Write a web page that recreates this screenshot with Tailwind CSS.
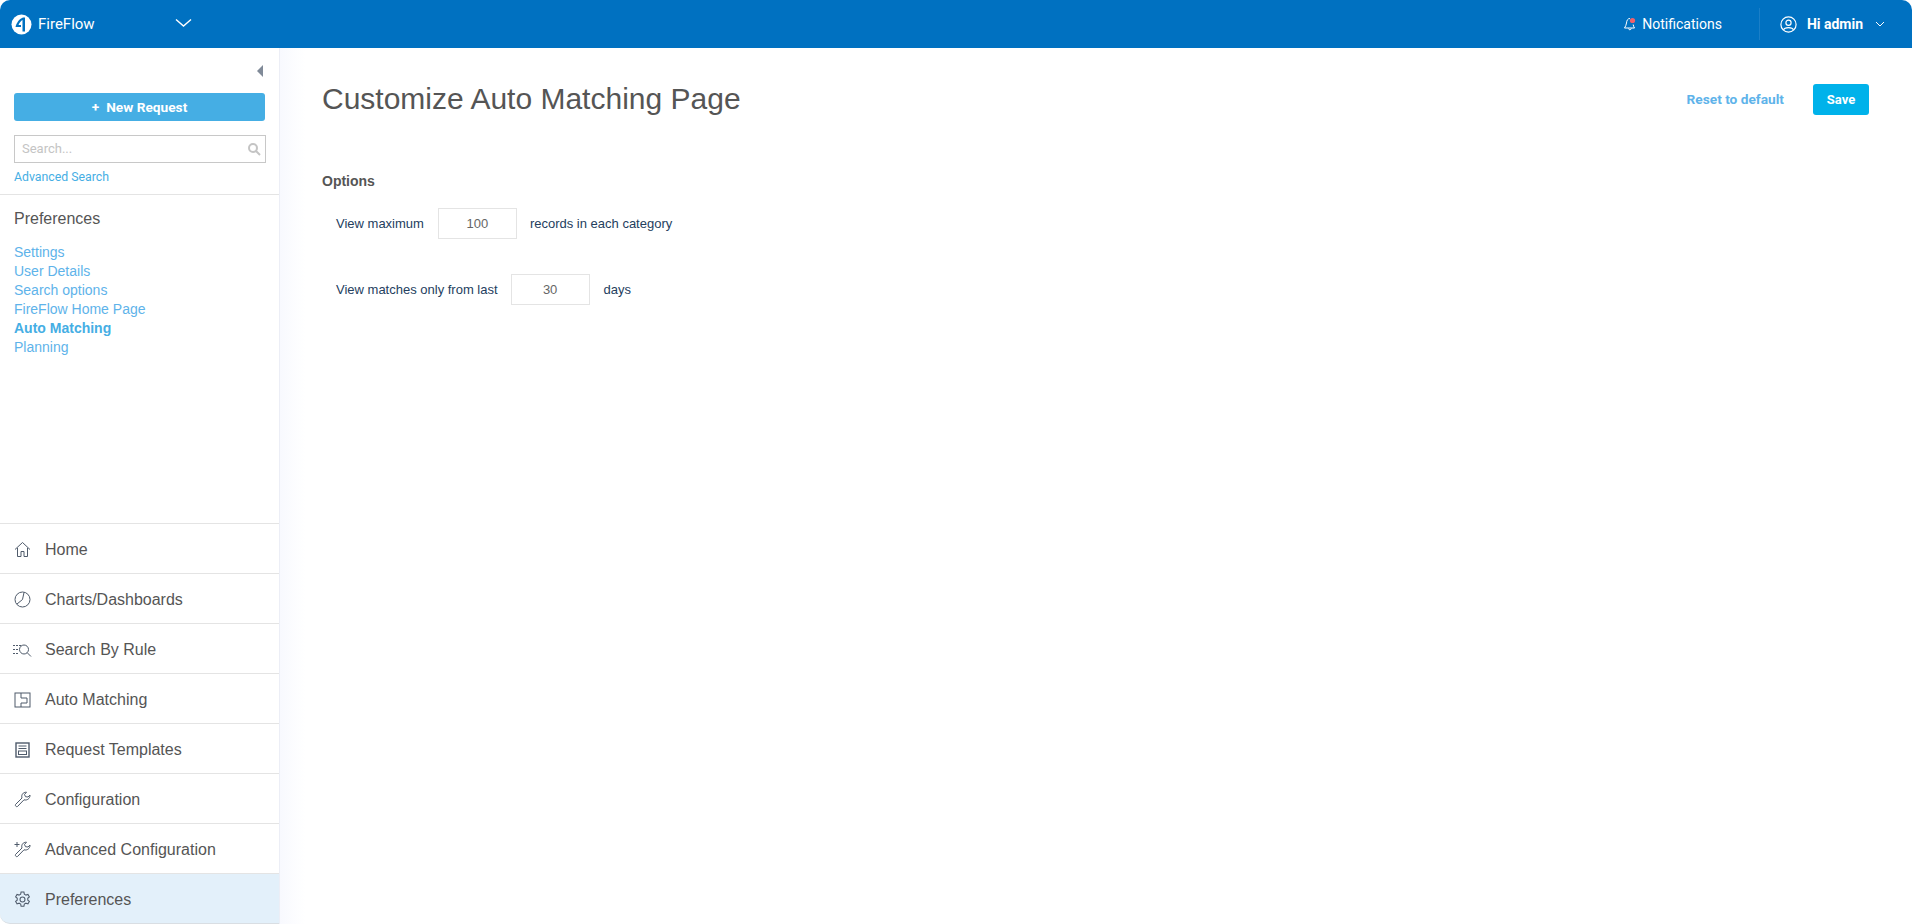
<!DOCTYPE html>
<html lang="en">
<head>
    <meta charset="UTF-8">
    <meta name="viewport" content="width=device-width, initial-scale=1.0">
    <title>Customize Auto Matching Page</title>
    <script src="https://cdn.jsdelivr.net/npm/@tailwindcss/browser@4"></script>
</head>
<body class="bg-white h-[924px] w-[1912px] overflow-hidden font-['Liberation_Sans',Arial,sans-serif]">
    <div class="h-full flex flex-col">
        <!-- Top bar -->
        <header class="h-[48px] shrink-0 bg-[#0071c1] rounded-t-[10px] flex items-center text-white font-['Roboto',sans-serif]">
            <div class="pl-[11px] flex items-center w-[175px]">
                <svg class="w-[21px] h-[21px]" viewBox="0 0 21 21">
                    <circle cx="10.5" cy="10.5" r="10" fill="#fff"/>
                    <path d="M12 3.5 C8 5 5.5 9 4.5 13 L10 13 L10 11 L7.5 11 C8.5 8.5 10 7 11.5 6 L11.5 17.5 L14 17.5 L14 3.5 Z" fill="#0071c1"/>
                </svg>
                <span class="ml-[6px] text-[15px]">FireFlow</span>
            </div>
            <svg class="w-[17px] h-[10px] mb-[2px]" viewBox="0 0 17 10" fill="none" stroke="#fff" stroke-width="1.4"><path d="M1 1.5 L8.5 8 L16 1.5"/></svg>
            <div class="ml-auto flex items-center h-full">
                <svg class="w-[14px] h-[14px]" viewBox="0 0 14 14" fill="none" stroke="#fff" stroke-width="1">
                    <path d="M7 1.5 C4.5 1.5 3.8 3.5 3.5 6 C3.3 8 2.4 9.5 1.5 11 L11.5 11 C10.8 10 10.4 9 10.2 7.5"/>
                    <path d="M5.5 11.5 C5.7 13.2 8 13.2 8.3 11.5"/>
                    <circle cx="9.5" cy="3.5" r="2.6" fill="#f0606a" stroke="none"/>
                </svg>
                <span class="ml-[5px] text-[14px]">Notifications</span>
                <div class="ml-[37px] w-px h-[32px] bg-[#1a7fc8]"></div>
                <svg class="ml-[20px] w-[17px] h-[17px]" viewBox="0 0 17 17" fill="none" stroke="#fff" stroke-width="1.2">
                    <circle cx="8.5" cy="8.5" r="7.6"/>
                    <circle cx="8.5" cy="6.8" r="2.6"/>
                    <path d="M3.6 14 C4.5 10.8 12.5 10.8 13.4 14"/>
                </svg>
                <span class="ml-[10px] text-[14px] font-bold">Hi admin</span>
                <svg class="ml-[12px] mr-[27px] w-[10px] h-[7px]" viewBox="0 0 10 7" fill="none" stroke="#fff" stroke-width="1"><path d="M1 1 L5 5 L9 1"/></svg>
            </div>
        </header>

        <div class="flex-1 flex min-h-0">
            <!-- Left panel -->
            <aside class="w-[280px] shrink-0 border-r border-r-[#eceef6] flex flex-col bg-white">
                <div class="h-[147px] border-b border-[#e4e4e4] shrink-0 pl-[14px] pr-[14px]">
                    <div class="flex justify-end h-[45px] pt-[17px] pr-[2px]">
                        <div class="w-0 h-0 border-y-[6px] border-y-transparent border-r-[6px] border-r-[#808a98]"></div>
                    </div>
                    <button class="w-[251px] h-[28px] rounded-[3px] bg-[#45aee4] text-white text-[13.7px] font-bold font-['Roboto',sans-serif] flex items-center justify-center">
                        <span class="mr-[7px]">+</span>New Request
                    </button>
                    <div class="mt-[14px] w-[252px] h-[28px] border border-[#c8c8c8] flex items-center justify-between pl-[7px] pr-[4px]">
                        <span class="text-[13px] text-[#c4c4c4] font-['Roboto',sans-serif]">Search...</span>
                        <svg class="w-[14px] h-[14px]" viewBox="0 0 14 14" fill="none" stroke="#c4c4c4" stroke-width="2"><circle cx="6" cy="6" r="4"/><path d="M9 9 L13 13"/></svg>
                    </div>
                    <a class="block mt-[7px] text-[12.3px] leading-[14px] text-[#45aee4] font-['Roboto',sans-serif]">Advanced Search</a>
                </div>

                <div class="flex-1 pl-[14px] min-h-0">
                    <h2 class="mt-[15px] text-[16px] leading-[18px] text-[#555]">Preferences</h2>
                    <ul class="mt-[15px] text-[14px] leading-[19px] text-[#5eb3ea]">
                        <li>Settings</li>
                        <li>User Details</li>
                        <li>Search options</li>
                        <li>FireFlow Home Page</li>
                        <li class="font-bold text-[#45aee4]">Auto Matching</li>
                        <li>Planning</li>
                    </ul>
                </div>

                <!-- Bottom menu -->
                <nav class="shrink-0 text-[16px] text-[#555]">
                    <a class="h-[50px] pt-[2px] border-t border-[#e4e4e4] flex items-center pl-[14px]">
                        <svg class="w-[17px] h-[17px]" viewBox="0 0 17 17" fill="none" stroke="#4f5b6b"><path d="M1 8.5 L8.5 1.5 L16 8.5 M3.5 7 L3.5 15.5 L7 15.5 L7 10.5 L10 10.5 L10 15.5 L13.5 15.5 L13.5 7"/></svg>
                        <span class="ml-[14px]">Home</span>
                    </a>
                    <a class="h-[50px] pt-[2px] border-t border-[#e4e4e4] flex items-center pl-[14px]">
                        <svg class="w-[17px] h-[17px]" viewBox="0 0 17 17" fill="none" stroke="#4f5b6b"><circle cx="8.5" cy="8.5" r="7.5"/><path d="M10 1.5 L8.5 8.5 L3 13"/></svg>
                        <span class="ml-[14px]">Charts/Dashboards</span>
                    </a>
                    <a class="h-[50px] pt-[2px] border-t border-[#e4e4e4] flex items-center pl-[13px]">
                        <svg class="w-[19px] h-[14px]" viewBox="0 0 19 14" fill="none" stroke="#4f5b6b"><path d="M0 2.5 H8 M0 6.5 H5 M0 10.5 H6" stroke-dasharray="2 1"/><circle cx="11" cy="6.5" r="4.5"/><path d="M14.2 9.7 L18 13.5"/></svg>
                        <span class="ml-[13px]">Search By Rule</span>
                    </a>
                    <a class="h-[50px] pt-[2px] border-t border-[#e4e4e4] flex items-center pl-[14px]">
                        <svg class="w-[17px] h-[16px]" viewBox="0 0 17 16" fill="none" stroke="#4f5b6b"><rect x="1" y="1" width="15" height="14"/><path d="M7 1 V6 H13 V11 H7 V15"/></svg>
                        <span class="ml-[14px]">Auto Matching</span>
                    </a>
                    <a class="h-[50px] pt-[2px] border-t border-[#e4e4e4] flex items-center pl-[15px]">
                        <svg class="w-[15px] h-[16px]" viewBox="0 0 15 16" fill="none" stroke="#4f5b6b"><rect x="1" y="1" width="13" height="14" stroke-width="1.4"/><path d="M3.5 4 H11.5 M3.5 6.5 H11.5"/><rect x="3.5" y="9" width="8" height="3.5"/></svg>
                        <span class="ml-[15px]">Request Templates</span>
                    </a>
                    <a class="h-[50px] pt-[2px] border-t border-[#e4e4e4] flex items-center pl-[14px]">
                        <svg class="w-[17px] h-[17px]" viewBox="0 0 17 17" fill="none" stroke="#4f5b6b"><path d="M1.5 13.5 L8 7 C7 4 9 1 12.5 1.2 L10.5 3.5 L11.5 5.7 L14 6 L16 4 C16.2 7.5 13 9.8 10 8.8 L3.5 15.5 C2.5 16.3 0.8 14.6 1.5 13.5 Z"/></svg>
                        <span class="ml-[14px]">Configuration</span>
                    </a>
                    <a class="h-[50px] pt-[2px] border-t border-[#e4e4e4] flex items-center pl-[14px]">
                        <svg class="w-[17px] h-[17px]" viewBox="0 0 17 17" fill="none" stroke="#4f5b6b"><path d="M1.5 13.5 L8 7 C7 4 9 1 12.5 1.2 L10.5 3.5 L11.5 5.7 L14 6 L16 4 C16.2 7.5 13 9.8 10 8.8 L3.5 15.5 C2.5 16.3 0.8 14.6 1.5 13.5 Z M3 1 V6 M0.5 3.5 H5.5"/></svg>
                        <span class="ml-[14px]">Advanced Configuration</span>
                    </a>
                    <a class="h-[51px] pt-[2px] border-t border-[#e4e4e4] border-b border-b-[#d9dee3] flex items-center pl-[14px] bg-[#e3f0fa] rounded-bl-[10px]">
                        <svg class="w-[17px] h-[17px]" viewBox="0 0 24 24" fill="none" stroke="#4f5b6b" stroke-width="1.5"><circle cx="12" cy="12" r="3.5"/><path d="M10 1.5 h4 l.6 3 a8 8 0 0 1 2.2 1.3 l2.9-1 2 3.4 -2.3 2 a8 8 0 0 1 0 2.6 l2.3 2 -2 3.4 -2.9-1 a8 8 0 0 1-2.2 1.3 l-.6 3 h-4 l-.6-3 a8 8 0 0 1-2.2-1.3 l-2.9 1 -2-3.4 2.3-2 a8 8 0 0 1 0-2.6 l-2.3-2 2-3.4 2.9 1 a8 8 0 0 1 2.2-1.3 z"/></svg>
                        <span class="ml-[14px]">Preferences</span>
                    </a>
                </nav>
            </aside>

            <!-- Main content -->
            <main class="flex-1 pl-[42px] pr-[43px] pt-[33px] bg-[linear-gradient(to_right,#f8f9fe,#ffffff_25px)]">
                <div class="flex justify-between items-start">
                    <h1 class="text-[30px] leading-[36px] text-[#555]">Customize Auto Matching Page</h1>
                    <div class="flex items-center mt-[3px]">
                        <a class="text-[13.7px] font-bold text-[#5eb3ea] font-['Roboto',sans-serif]">Reset to default</a>
                        <button class="ml-[29px] w-[56px] h-[31px] rounded-[3px] bg-[#00b2ea] text-white text-[13px] font-bold font-['Roboto',sans-serif]">Save</button>
                    </div>
                </div>
                <h3 class="mt-[56px] text-[14px] leading-[16px] font-bold text-[#555]">Options</h3>
                <div class="mt-[19px] pl-[14px] flex items-center text-[13px] text-[#24405e]">
                    <span>View maximum</span>
                    <input class="ml-[14px] w-[79px] h-[31px] border border-[#e4e4e4] text-center text-[#666] outline-none" value="100">
                    <span class="ml-[13px]">records in each category</span>
                </div>
                <div class="mt-[35px] pl-[14px] flex items-center text-[13px] text-[#24405e]">
                    <span>View matches only from last</span>
                    <input class="ml-[13px] w-[79px] h-[31px] border border-[#e4e4e4] text-center text-[#666] outline-none" value="30">
                    <span class="ml-[14px]">days</span>
                </div>
            </main>
        </div>
    </div>
</body>
</html>
